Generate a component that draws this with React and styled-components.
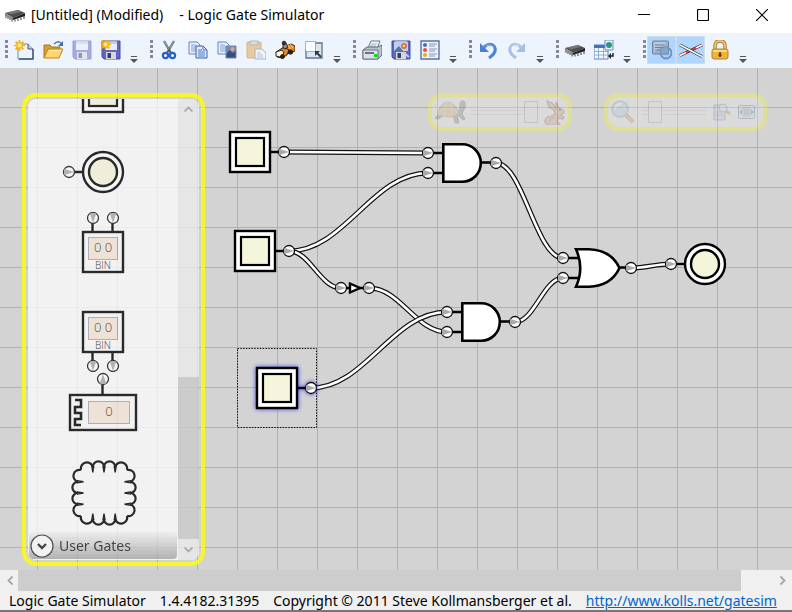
import React from 'react';
import styled, { createGlobalStyle, css } from 'styled-components';

const GlobalStyle = createGlobalStyle`
  * { box-sizing: border-box; }
  body { margin: 0; }
  button { font: inherit; color: inherit; border: 0; padding: 0; background: none; }
`;

const Window = styled.div`
  display: flex;
  flex-direction: column;
  height: 100vh;
  overflow: hidden;
  background: #fff;
  border-bottom: 2px solid #777;
  color: #000;
  font: 14px/18px 'Segoe UI', 'Noto Sans', sans-serif;
`;

const TitleBar = styled.header`
  display: flex;
  align-items: center;
  flex: none;
  height: 33px;
  padding: 0 1px 4px 5px;
`;

const Title = styled.h1`
  display: flex;
  flex: 1;
  gap: 16px;
  margin: 0 0 0 6px;
  font: inherit;
  white-space: nowrap;
`;

const CaptionButton = styled.button`
  display: grid;
  place-items: center;
  width: 59px;
  height: 29px;
`;

const ToolTray = styled.nav`
  display: flex;
  flex: none;
  height: 35px;
  padding: 3px 0 4px;
  background: #eef4fd;
`;

const ToolGroup = styled.div`
  display: flex;
  flex: none;
  padding-right: 3px;
`;

const Grip = styled.span`
  width: 3px;
  height: 18px;
  margin: 4px 1px 0 5px;
  background: repeating-linear-gradient(#858a91 0 3px, transparent 3px 5px);
`;

const ToolButton = styled.button`
  display: grid;
  place-items: center;
  width: 29px;
  height: 28px;
  border: 1px solid transparent;
  ${(p) => p.$faded && css`opacity: 0.5;`}
  ${(p) => p.$checked && css`
    background: #b0d6ff;
    border-color: #d0dce9;
  `}
`;

const Overflow = styled.button`
  display: grid;
  place-items: end center;
  width: 17px;
  height: 28px;
`;

const Workspace = styled.main`
  position: relative;
  flex: 1;
  min-height: 0;
  overflow: hidden;
  background-color: #d3d3d3;
  background-image:
    linear-gradient(90deg, #b1b1b1 1px, transparent 1px),
    linear-gradient(#b1b1b1 1px, transparent 1px);
  background-size: 40px 40px;
  background-position: 37px 39px;
`;

const Circuit = styled.svg`
  display: block;
  width: 100%;
  height: 100%;
`;

const Selected = styled.g`
  filter: drop-shadow(0 0 2px #3a35e8);
`;

const Palette = styled.aside`
  position: absolute;
  top: 25px;
  bottom: 4px;
  left: 22px;
  display: flex;
  width: 183px;
  padding: 2px;
  border: 4px solid #ff0;
  border-radius: 14px;
  opacity: 0.8;
`;

const PaletteBody = styled.div`
  display: flex;
  flex: 1;
  overflow: hidden;
  border-radius: 8px;
  background: #fafafa;
`;

const PaletteColumn = styled.div`
  display: flex;
  flex: 1;
  flex-direction: column;
  min-width: 0;
`;

const GateList = styled.div`
  display: flex;
  flex: 1;
  flex-direction: column;
  justify-content: flex-end;
  min-height: 0;
  overflow: hidden;
`;

const GateTile = styled.svg`
  display: block;
  flex: none;
  width: 100%;
  height: 80px;
`;

const GroupHeader = styled.button`
  display: flex;
  align-items: center;
  flex: none;
  gap: 5px;
  height: 27px;
  margin: 0 1px 1px;
  padding: 1px 0 0 1px;
  border-radius: 4px;
  background: linear-gradient(#f4f4f4, #aaa);
  color: #222;
`;

const ScrollColumn = styled.div`
  display: flex;
  flex-direction: column;
  width: 21px;
  background: #ebebeb;
`;

const ScrollArrow = styled.button`
  display: grid;
  place-items: center;
  flex: none;
  width: 20px;
  height: 21px;
`;

const VerticalThumb = styled.div`
  height: 162px;
  margin-top: auto;
  background: #cbcbcb;
`;

const Controls = styled.div`
  position: absolute;
  top: 25px;
  right: 25px;
  display: flex;
  gap: 32px;
  opacity: 0.27;
`;

const ControlPanel = styled.div`
  display: flex;
  align-items: center;
  gap: ${(p) => p.$gap}px;
  height: 38px;
  padding: 0 ${(p) => p.$end}px 0 3px;
  border: 4px solid #ff0;
  border-radius: 14px;
  background: #f2f2f2;
`;

const PanelButton = styled.button`
  display: grid;
  place-items: center;
`;

const Slider = styled.input`
  appearance: none;
  width: ${(p) => p.$width}px;
  height: 22px;
  margin: 0;
  background: linear-gradient(#c4c4c4, #c4c4c4) 0 9px / 100% 1px no-repeat,
    linear-gradient(#c4c4c4, #c4c4c4) 0 13px / 100% 1px no-repeat;
  &::-webkit-slider-thumb {
    appearance: none;
    width: 14px;
    height: 22px;
    border: 1px solid #999;
    background: #eee;
  }
`;

const HorizontalScroll = styled.div`
  display: flex;
  flex: none;
  height: 21px;
  background: #f0f0f0;
`;

const HorizontalThumb = styled.div`
  flex: 1;
  margin: 0 31px 0 -2px;
  background: #cdcdcd;
`;

const StatusBar = styled.footer`
  display: flex;
  align-items: center;
  flex: none;
  gap: 14px;
  height: 19px;
  padding: 1px 0 0 9px;
  background: #f0f0f0;
  white-space: nowrap;
`;

const SiteLink = styled.a`
  color: #0066cc;
`;

const Readout = styled.text`
  font-family: 'Segoe UI', 'Open Sans', sans-serif;
  font-size: ${(p) => p.$size}px;
  font-weight: ${(p) => p.$weight || 400};
  fill: #222;
  text-anchor: middle;
`;

const Chip = () => (
  <svg width="20" height="20" viewBox="0 0 20 20">
    <path d="M0 8 13 5l7 3-12 5z" fill="#4c4e50" />
    <path d="M0 8v2l8 5v-2z" fill="#808080" />
    <path d="M8 13v2l12-4V8z" fill="#222" />
    <path d="M2 7.500 13 5l4 1.600L6 9.500z" fill="#75787a" />
    <path d="M1 10v3M3 11v3M5 12v3M7 13.500v3M10 14.500v2M13 13.500v2.500M16 12.500v2.500M19 11v3" stroke="#4b4b4b" strokeWidth="1.100" />
    <path d="M2 9v4M4 10v4M6 11v4" stroke="#bcbcbc" strokeWidth=".6" />
  </svg>
);

const Sun = () => (
  <g>
    <path d="M5.500 0v11M0 5.500h11M1.600 1.600l7.800 7.800M9.400 1.600 1.600 9.400" stroke="#f9a90c" strokeWidth="1.600" />
    <circle cx="5.500" cy="5.500" r="3.300" fill="#ffb515" />
    <circle cx="5.500" cy="5.500" r="1.900" fill="#fff07a" />
  </g>
);

const Disk = () => (
  <g>
    <path d="M1 1h18v18H3l-2-2z" fill="#5f66c6" stroke="#444a9f" />
    <path d="M4 1.500h12V10H4z" fill="#e9edf8" />
    <path d="M4 1.500h12V4H4z" fill="#c3cdea" />
    <path d="M5 12h10v7H5z" fill="#d5d8df" />
    <path d="M6.500 13h3.500v5H6.500z" fill="#393c66" />
  </g>
);

const Pages = ({ picture }) => (
  <g>
    <path d="M1 2h8l3 3v9H1z" fill="#eaf1fc" stroke="#6582b5" />
    <path d="M3 5h5M3 7h7M3 9h7M3 11h7" stroke="#7ea0d8" />
    {picture ? (
      <g>
        <path d="M9 6h10v12H9z" fill="#6a8cc4" stroke="#7686a3" />
        <path d="M9.500 14l3-4 3 3 3-2v6.500h-9z" fill="#354c7c" />
        <circle cx="15.500" cy="9" r="2" fill="#f0a069" />
      </g>
    ) : (
      <g>
        <path d="M8 6h7l4 4v8H8z" fill="#dfe9fa" stroke="#3e61a6" />
        <path d="M10 10h4M10 12h7M10 14h7M10 16h7M15 6v4h4" fill="none" stroke="#4f7cc8" />
      </g>
    )}
  </g>
);

const ICONS = {
  New: (
    <g>
      <path d="M4 4h10l5 5v10H4z" fill="#edf3fb" stroke="#7489a8" />
      <path d="M14 4v5h5" fill="#c2d0e4" stroke="#405774" />
      <path d="M19 9v10H5" fill="none" stroke="#3c5675" strokeWidth="1.400" />
      <Sun />
    </g>
  ),
  Open: (
    <g>
      <path d="M1 18V5h6l2 2h8v3" fill="#d99e2e" stroke="#a97513" />
      <path d="M1 18 5 9h15l-4 9z" fill="#ffd66d" stroke="#bd8418" />
      <path d="M6 10.500h12" stroke="#fff0b5" />
      <path d="M11 4q4-4 7-1" fill="none" stroke="#547494" strokeWidth="1.500" />
      <path d="M20 1v5h-5z" fill="#4a6d90" />
    </g>
  ),
  Save: <Disk />,
  'Save As': (
    <g>
      <Disk />
      <g transform="translate(-1 -1)"><Sun /></g>
    </g>
  ),
  Cut: (
    <g fill="none">
      <path d="M5 1l7 12M15 1 8 13" stroke="#53606e" strokeWidth="2.200" />
      <path d="M5 1l5 8M15 1l-4 7" stroke="#b1bdc9" strokeWidth=".8" />
      <circle cx="6.500" cy="15.500" r="2.600" stroke="#2762be" strokeWidth="2.200" />
      <circle cx="13.500" cy="15.500" r="2.600" stroke="#2762be" strokeWidth="2.200" />
    </g>
  ),
  Copy: <Pages />,
  'Copy as Image': <Pages picture />,
  Paste: (
    <g>
      <rect x="1" y="2" width="14" height="16" rx="1" fill="#e5a43c" stroke="#a77831" />
      <path d="M4 1h8v4H4z" fill="#bfc5cd" stroke="#747b86" />
      <path d="M9 9h7l4 4v6H9z" fill="#eef2f8" stroke="#65748e" />
      <path d="M11 13h4M11 15h6M11 17h6" stroke="#8c9bb5" />
    </g>
  ),
  'Flip Gate': (
    <g stroke="#22180f" strokeWidth=".9">
      <path d="M11 6l5-2 4 2v5l-4 2-6 1z" fill="#ef8c1c" />
      <path d="M1 12l8-5 5 3-2 5-5 3-5-1z" fill="#ee8620" />
      <path d="M1 12l6-2 2 3-4 4-4-1z" fill="#fff4e1" />
      <path d="M8 8V4l3-1 2 4-3 2z" fill="#8f8f92" />
      <circle cx="9" cy="3" r="1.800" fill="#383838" />
      <path d="M13 5l3 5M15 4l3 4" stroke="#ffd08a" />
      <circle cx="15.500" cy="12" r="2.200" fill="#29251f" />
      <circle cx="7.500" cy="16.500" r="2" fill="#29251f" />
    </g>
  ),
  'Select All': (
    <g>
      <path d="M3 3h15v15H2V9" fill="#dbe4ef" stroke="#5d758c" strokeWidth="1.300" />
      <rect x="1.500" y="1.500" width="10" height="10" fill="#f9fcff" stroke="#56728b" strokeDasharray="1 1" />
      <path d="M17 17l-4-4" stroke="#243c50" strokeWidth="2" />
      <path d="M11 11h5l-5 5z" fill="#243c50" />
    </g>
  ),
  Print: (
    <g>
      <path d="M6 8 9 1h9l-3 8" fill="#f6f8fb" stroke="#68778a" />
      <path d="M9 4h6M8 6h6" stroke="#9fadc0" />
      <path d="M1 10l4-3h11l4-2v10l-4 4H1z" fill="#b9c3cf" stroke="#5b6876" />
      <path d="M1 10h15v9H1z" fill="#dce2e8" stroke="#697786" />
      <path d="M3 12h9v2H3z" fill="#65727f" />
      <rect x="12" y="14" width="4" height="3" fill="#18d820" />
    </g>
  ),
  'Save as Image': (
    <g>
      <Disk />
      <path d="M3 2h14v9H3z" fill="#bad0f4" />
      <path d="M3 11l5-5 4 5z" fill="#5577ad" />
      <circle cx="13" cy="6" r="3" fill="#e86f35" />
      <circle cx="13" cy="6" r="1.300" fill="#ffc393" />
      <path d="M12 12l6 5" stroke="#c8cfdf" strokeWidth="2" />
    </g>
  ),
  Chart: (
    <g>
      <path d="M1 1h18v18H1z" fill="#edf3fd" stroke="#5873a0" strokeWidth="1.400" />
      <circle cx="5" cy="5" r="2" fill="#4c65dc" />
      <circle cx="5" cy="10" r="2" fill="#ea5230" />
      <circle cx="5" cy="15" r="2" fill="#efa52b" />
      <path d="M9 4h8M9 6h6M9 9h8M9 11h6M9 14h8M9 16h6" stroke="#8497b9" />
    </g>
  ),
  Undo: (
    <g>
      <path d="M6 7q6-5 10-1 4 6-5 12" fill="none" stroke="#4f83d7" strokeWidth="3" />
      <path d="M2 3v9h9z" fill="#4a7ed4" />
      <path d="M8 5.500q5-2 8 2" fill="none" stroke="#9fc1f5" />
    </g>
  ),
  Redo: (
    <g>
      <path d="M14 7Q8 2 4 6q-4 6 5 12" fill="none" stroke="#6492d2" strokeWidth="3" />
      <path d="M18 3v9H9z" fill="#578bcd" />
      <path d="M12 5.500q-5-2-8 2" fill="none" stroke="#c1d7f2" />
    </g>
  ),
  'Create IC': <Chip />,
  'Truth Table': (
    <g>
      <path d="M0 5h14v14H0z" fill="#f5f9ff" stroke="#5581c0" />
      <path d="M0 5h14v3H0z" fill="#3f73c0" />
      <path d="M0 11.500h14M0 15h14M4.500 8v11M9.500 8v11" stroke="#8aaeda" />
      <path d="M11 0h8v10h-8z" fill="#e9f2f9" stroke="#6d91b0" />
      <circle cx="15" cy="5" r="3" fill="#358cbb" />
      <path d="M13 4l3-1 1 3-2 2z" fill="#25a34a" />
      <path d="M19 13v3h-3" fill="none" stroke="#222" strokeWidth="1.500" />
      <path d="M14 16l3-3v6z" fill="#222" />
    </g>
  ),
  'Show Shadows': (
    <g>
      <circle cx="14" cy="13" r="5.500" fill="#a9ccf0" stroke="#6c93c0" strokeWidth="1.800" />
      <rect x=".5" y="1" width="16" height="13" rx="1" fill="#9db1c7" stroke="#6d849c" />
      <path d="M2 2h13L2 12z" fill="#b7c9db" />
      <path d="M3 5h9M3 7.500h9M3 10h6" stroke="#6a839e" />
      <path d="M8.500 14a5.500 5.500 0 0 1 8-6.500V14z" fill="#86a5c7" stroke="#6c93c0" />
    </g>
  ),
  Lock: (
    <g>
      <path d="M5 10V6q0-5 5-5t5 5v4" fill="none" stroke="#a77a29" strokeWidth="3.400" />
      <path d="M5 10V6q0-5 5-5t5 5v4" fill="none" stroke="#f6d277" strokeWidth="1.500" />
      <rect x="2" y="9" width="16" height="10" rx="2" fill="#f0b23a" stroke="#b5822c" />
      <path d="M3 11h14" stroke="#ffe48c" strokeWidth="1.500" />
      <path d="M10 12v5M8.500 15h3" stroke="#5b3c0c" strokeWidth="1.800" />
    </g>
  ),
};

const WireIcon = () => (
  <svg width="24" height="20" viewBox="0 0 24 20">
    <path d="M1 15.500 23 5" stroke="#222" strokeWidth="2.800" />
    <path d="M1 15.500 23 5" stroke="#ff3a3a" strokeWidth="1.600" />
    <path d="M1 15.500l6-2.860M17 7.860 23 5" stroke="#fff" strokeWidth="1.600" />
    <path d="M1 5l22 11.500" stroke="#222" strokeWidth="2.800" />
    <path d="M1 5l22 11.500" stroke="#fff" strokeWidth="1.600" />
  </svg>
);

const Icon = ({ name }) =>
  name === 'Colored Wires' ? <WireIcon /> : (
    <svg width="20" height="20" viewBox="0 0 20 20">{ICONS[name]}</svg>
  );

const TOOL_GROUPS = [
  ['New', 'Open', 'Save', 'Save As'],
  ['Cut', 'Copy', 'Copy as Image', 'Paste', 'Flip Gate', 'Select All'],
  ['Print', 'Save as Image', 'Chart'],
  ['Undo', 'Redo'],
  ['Create IC', 'Truth Table'],
  ['Show Shadows', 'Colored Wires', 'Lock'],
];
const FADED = ['Save', 'Paste', 'Redo'];
const CHECKED = ['Show Shadows', 'Colored Wires'];

const Chevron = ({ dir = 'down' }) => {
  const turn = { down: 0, up: 180, left: 90, right: 270 }[dir];
  return (
    <svg width="11" height="11" viewBox="0 0 11 11">
      <path d="M1.500 3.500l4 4 4-4" fill="none" stroke="#a6a6a6" strokeWidth="1.800" transform={`rotate(${turn} 5.5 5.5)`} />
    </svg>
  );
};

const Port = ({ x, y, turn = 0 }) => (
  <g transform={`translate(${x} ${y}) rotate(${turn})`}>
    <circle r="5.500" fill="#fff" stroke="#111" strokeWidth="1.300" />
    <path d="M-4.800-3.300 5 0-4.800 3.300z" fill="#aaa" />
  </g>
);

const Lead = ({ d }) => <path d={d} stroke="#000" strokeWidth="2.400" fill="none" />;

const SwitchGate = ({ x, y }) => (
  <g transform={`translate(${x} ${y})`}>
    <Lead d="M21 0h8" />
    <rect x="-20" y="-20" width="40" height="40" fill="#fff" stroke="#000" strokeWidth="2.400" />
    <rect x="-14" y="-14" width="28" height="28" fill="#f5f5dc" stroke="#000" strokeWidth="2.200" />
    <Port x={34} y={0} />
  </g>
);

const LampGate = ({ x, y }) => (
  <g transform={`translate(${x} ${y})`}>
    <Lead d="M-28 0h8" />
    <circle r="20" fill="#fff" stroke="#000" strokeWidth="2.400" />
    <circle r="14" fill="#f5f5dc" stroke="#000" strokeWidth="2.400" />
    <Port x={-34} y={0} />
  </g>
);

const BinaryGate = ({ x, y, output }) => {
  const s = output ? 1 : -1;
  return (
    <g transform={`translate(${x} ${y})`}>
      <Lead d={`M-10.500 ${s * 20}V${s * 29}M9.500 ${s * 20}V${s * 29}`} />
      <rect x="-20" y="-20" width="40" height="40" fill="#fafafa" stroke="#000" strokeWidth="2.400" />
      <rect x="-14.500" y="-14.500" width="29" height="22" fill="#f6e6d7" stroke="#a6a6ae" />
      <Readout $size={13} $weight={300}>0 0</Readout>
      <Readout y="17" $size={10} $weight={300}>BIN</Readout>
      <Port x={-10} y={s * 34} turn={90} />
      <Port x={10} y={s * 34} turn={90} />
    </g>
  );
};

const NumberGate = ({ x, y }) => (
  <g transform={`translate(${x} ${y})`}>
    <Lead d="M-.500-18v-9" />
    <rect x="-33" y="-17" width="66" height="35" fill="#fafafa" stroke="#000" strokeWidth="2.400" />
    <path d="M-28-12h6v7h-6v6h6v6h-6v6h6" fill="none" stroke="#000" strokeWidth="2.600" />
    <rect x="-14.500" y="-10.500" width="41" height="22" fill="#f6e6d7" stroke="#a6a6ae" />
    <Readout x="6" y="4" $size={13} $weight={300}>0</Readout>
    <Port x={0} y={-33} turn={270} />
  </g>
);

const CloudGate = ({ x, y }) => (
  <g transform={`translate(${x} ${y})`} fill="none" stroke="#000" strokeWidth="2.200">
    {[0, 90, 180, 270].map((turn) => (
      <g key={turn} transform={`rotate(${turn})`}>
        <path d="M-23-23A6 6 0 1 1-11.200-26A5.600 5.600 0 0 1 0-26A5.600 5.600 0 0 1 11.200-26A6 6 0 1 1 23-23" />
        <path d="M-12.200-27l1 6.500 1-6.500M-1-27l1 6.500 1-6.500M10.200-27l1 6.500 1-6.500" strokeWidth="1.400" />
      </g>
    ))}
  </g>
);

const AndGate = ({ x, y }) => (
  <g transform={`translate(${x} ${y})`}>
    <Lead d="M-29-10h10M-29 10h10M19-.500h10" />
    <path d="M-18.700-18.700h19A18.500 18.700 0 0 1 .3 18.700h-19z" fill="#fff" stroke="#000" strokeWidth="2.600" />
    <Port x={-34} y={-10} />
    <Port x={-34} y={10} />
    <Port x={34} y={0} />
  </g>
);

const OrGate = ({ x, y }) => (
  <g transform={`translate(${x} ${y})`}>
    <Lead d="M-29-10h12M-29 10h12M21-.500h8" />
    <path d="M-21-18.700H-8Q14-18 22.500 0 14 18 -8 18.700H-21Q-12.500 0-21-18.700z" fill="#fff" stroke="#000" strokeWidth="2.600" />
    <Port x={-34} y={-10} />
    <Port x={-34} y={10} />
    <Port x={34} y={0} />
  </g>
);

const BufferGate = ({ x, y }) => (
  <g transform={`translate(${x} ${y})`}>
    <Lead d="M-9 0h3M4 0h5" />
    <path d="M-5-4.500 5 0-5 4.500z" fill="#fff" stroke="#000" strokeWidth="2.400" />
    <Port x={-14} y={0} />
    <Port x={14} y={0} />
  </g>
);

const WIRES = [
  [284, 84, 428, 85],
  [289, 183, 428, 105],
  [289, 183, 341, 220],
  [369, 220, 447, 264],
  [311, 320, 447, 244],
  [496, 95, 563, 190],
  [515, 254, 563, 210],
  [631, 200, 671, 196],
];

const Wire = ({ ends: [x1, y1, x2, y2] }) => {
  const reach = (x2 - x1) * 0.4;
  const d = `M${x1} ${y1}C${x1 + reach} ${y1} ${x2 - reach} ${y2} ${x2} ${y2}`;
  return (
    <g fill="none">
      <path d={d} stroke="#111" strokeWidth="5" />
      <path d={d} stroke="#fff" strokeWidth="2.600" />
    </g>
  );
};

const Tile = ({ gate: Gate, ...rest }) => (
  <GateTile viewBox="0 0 150 80"><Gate x={75} y={40} {...rest} /></GateTile>
);

const Turtle = () => (
  <svg width="31" height="24" viewBox="0 0 31 24">
    <path d="M5 13 0 18l3 1 5-3M18 14l2 9h4l-2-8M20 12l5-2V3q2-4 5-1v5l-3 7 3 5-2 1-5-5z" fill="#7b857b" stroke="#5b655d" />
    <path d="M3 14Q4 4 12 2q8 0 12 11l-7 4-12-1z" fill="#cdb27a" stroke="#9b8d6d" />
    <path d="M4 12l6-4 7 1 6 3M10 8l2-6M17 9l-1-6M10 8l-1 8M17 9v7" fill="none" stroke="#f2dc9c" />
  </svg>
);

const Rabbit = () => (
  <svg width="23" height="25" viewBox="0 0 23 25">
    <path d="M12 10 7 7 5 1l5 2 4 5 0-6 3 6q5 1 5 5l-4 2 4 2-1 2-5-1-1 4 3 2-1 1H6q-4-2-3-5 2-4 7-4l3-2z" fill="#dda983" stroke="#8d5f41" strokeWidth="1.200" />
    <path d="M8 22q-1-5 5-4M14 14l3 3" fill="none" stroke="#8d5f41" />
    <circle cx="18" cy="10" r="1" fill="#2c1a12" />
  </svg>
);

const Magnifier = () => (
  <svg width="24" height="24" viewBox="0 0 24 24">
    <path d="M15 15l7 7" stroke="#a9752d" strokeWidth="4" />
    <path d="M15 15l7 7" stroke="#e1b04f" strokeWidth="2" />
    <circle cx="9" cy="9" r="8" fill="#b4d6ee" stroke="#91a2b2" strokeWidth="1.600" />
    <path d="M4 9q1-5 6-5" fill="none" stroke="#fff" strokeWidth="2" />
  </svg>
);

const ZoomSelection = () => (
  <svg width="18" height="18" viewBox="0 0 18 18">
    <path d="M1 2h11v15H1z" fill="#cbd2dd" stroke="#6d81a0" />
    <path d="M3 9h6M3 12h7" stroke="#8795aa" />
    <path d="M12 7l5 4" stroke="#d18c36" strokeWidth="3" />
    <circle cx="10" cy="5" r="4" fill="#e5edf4" stroke="#7e8997" />
  </svg>
);

const ZoomFit = () => (
  <svg width="17" height="16" viewBox="0 0 17 16">
    <rect x=".5" y="1.500" width="16" height="13" rx="1" fill="#e2eafa" stroke="#5a6f97" />
    <path d="M5 4h7v8H5z" fill="#fff" stroke="#7283a1" />
    <path d="M6 6h5M6 8h5M6 10h5" stroke="#394c70" />
    <path d="M1 8l3-3v6zM16 8l-3-3v6z" fill="#3d79cf" />
  </svg>
);

export default function App() {
  return (
    <Window>
      <GlobalStyle />
      <TitleBar>
        <Chip />
        <Title>
          <span>[Untitled] (Modified)</span>
          <span>- Logic Gate Simulator</span>
        </Title>
        <CaptionButton aria-label="Minimize">
          <svg width="12" height="12"><path d="M0 5.500h12" stroke="#000" /></svg>
        </CaptionButton>
        <CaptionButton aria-label="Maximize">
          <svg width="12" height="12"><rect x=".5" y=".5" width="11" height="11" rx="1" fill="none" stroke="#000" strokeWidth="1.200" /></svg>
        </CaptionButton>
        <CaptionButton aria-label="Close">
          <svg width="12" height="12"><path d="M0 0l12 12M12 0 0 12" stroke="#000" strokeWidth="1.200" /></svg>
        </CaptionButton>
      </TitleBar>
      <ToolTray>
        {TOOL_GROUPS.map((tools) => (
          <ToolGroup key={tools[0]}>
            <Grip />
            {tools.map((name) => (
              <ToolButton key={name} aria-label={name} $faded={FADED.includes(name)} $checked={CHECKED.includes(name)}>
                <Icon name={name} />
              </ToolButton>
            ))}
            <Overflow aria-label="More tools">
              <svg width="8" height="8"><path d="M1 .5h6" stroke="#555" /><path d="M0 3h8L4 7z" fill="#555" /></svg>
            </Overflow>
          </ToolGroup>
        ))}
      </ToolTray>
      <Workspace>
        <Circuit>
          {WIRES.map((ends) => <Wire key={ends.join()} ends={ends} />)}
          <SwitchGate x={250} y={84} />
          <SwitchGate x={255} y={183} />
          <rect x="237.500" y="280.500" width="79" height="79" fill="none" stroke="#000" strokeDasharray="1.400 1.400" />
          <Selected><SwitchGate x={277} y={320} /></Selected>
          <BufferGate x={355} y={220} />
          <AndGate x={462} y={95} />
          <AndGate x={481} y={254} />
          <OrGate x={597} y={200} />
          <LampGate x={705} y={196} />
        </Circuit>
        <Palette>
          <PaletteBody>
            <PaletteColumn>
              <GateList>
                <Tile gate={SwitchGate} />
                <Tile gate={LampGate} />
                <Tile gate={BinaryGate} />
                <Tile gate={BinaryGate} output />
                <Tile gate={NumberGate} />
                <Tile gate={CloudGate} x={76} y={41} />
              </GateList>
              <GroupHeader>
                <svg width="24" height="24" viewBox="0 0 24 24">
                  <circle cx="12" cy="12" r="11" fill="#fafafa" stroke="#333" strokeWidth="1.200" />
                  <path d="M8 10l4 4 4-4" fill="none" stroke="#222" strokeWidth="2.400" />
                </svg>
                User Gates
              </GroupHeader>
            </PaletteColumn>
            <ScrollColumn>
              <ScrollArrow aria-label="Scroll up"><Chevron dir="up" /></ScrollArrow>
              <VerticalThumb />
              <ScrollArrow aria-label="Scroll down"><Chevron /></ScrollArrow>
            </ScrollColumn>
          </PaletteBody>
        </Palette>
        <Controls>
          <ControlPanel $gap={4} $end={3}>
            <Turtle />
            <Slider type="range" aria-label="Simulation speed" defaultValue="100" $width={68} />
            <Rabbit />
          </ControlPanel>
          <ControlPanel $gap={7} $end={8}>
            <Magnifier />
            <Slider type="range" aria-label="Zoom" defaultValue="12" $width={64} />
            <PanelButton aria-label="Zoom to selection"><ZoomSelection /></PanelButton>
            <PanelButton aria-label="Zoom to fit"><ZoomFit /></PanelButton>
          </ControlPanel>
        </Controls>
      </Workspace>
      <HorizontalScroll>
        <ScrollArrow aria-label="Scroll left"><Chevron dir="left" /></ScrollArrow>
        <HorizontalThumb />
        <ScrollArrow aria-label="Scroll right"><Chevron dir="right" /></ScrollArrow>
      </HorizontalScroll>
      <StatusBar>
        <span>Logic Gate Simulator</span>
        <span>1.4.4182.31395</span>
        <span>Copyright © 2011 Steve Kollmansberger et al.</span>
        <SiteLink href="http://www.kolls.net/gatesim">http://www.kolls.net/gatesim</SiteLink>
      </StatusBar>
    </Window>
  );
}
